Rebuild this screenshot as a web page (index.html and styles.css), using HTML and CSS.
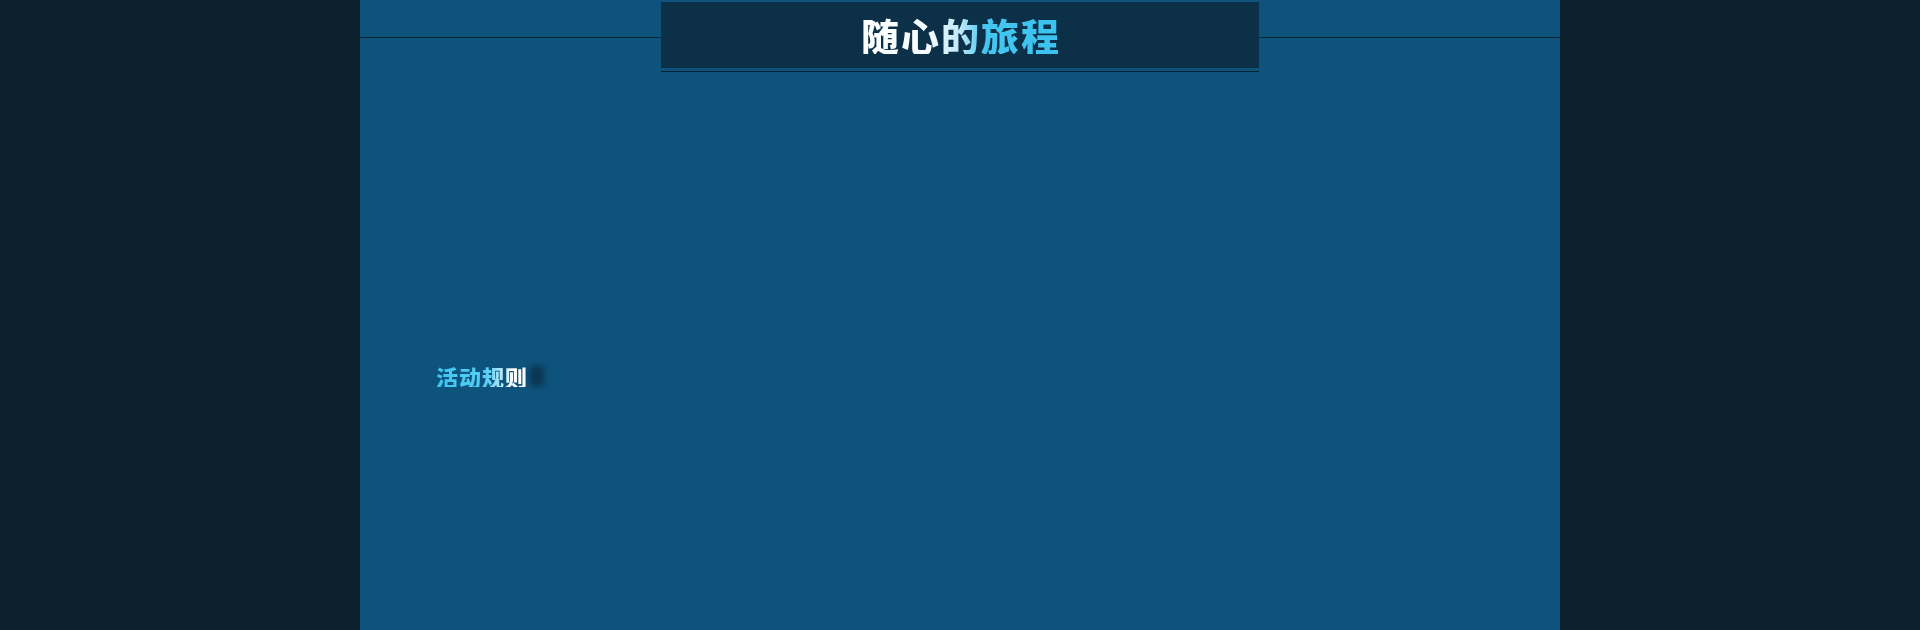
FILE: index.html
```html
<!DOCTYPE html>
<html lang="zh-CN">
<head>
<meta charset="utf-8">
<title>随心的旅程</title>
<link rel="stylesheet" href="styles.css">
</head>
<body>
<div class="page">
  <header class="header">
    <div class="rule-side"></div>
    <div class="title-wrap">
      <div class="title-box"><h1 class="title">随心的旅程</h1></div>
    </div>
    <div class="rule-side"></div>
  </header>
  <main class="content">
    <div class="rules"><span class="rules-text">活动规则</span><span class="rules-ghost"></span></div>
  </main>
</div>
</body>
</html>
```
FILE: styles.css
```css
html, body {
  margin: 0;
  padding: 0;
  height: 100%;
}
body {
  background: #0c202e;
  font-family: "Noto Sans CJK SC", "Noto Sans", sans-serif;
}
.page {
  width: 1200px;
  height: 630px;
  margin: 0 auto;
  background: #0e537c;
  display: flex;
  flex-direction: column;
  overflow: hidden;
}
.header {
  display: grid;
  grid-template-columns: 1fr 598px 1fr;
  align-items: start;
}
.rule-side {
  height: 37px;
  border-bottom: 1px solid #0b2434;
}
.title-wrap {
  padding-top: 2px;
  border-bottom: 1px solid #0b2434;
  padding-bottom: 3px;
}
.title-box {
  height: 66px;
  background: #0d3049;
  display: flex;
  align-items: center;
  justify-content: center;
}
.title {
  margin: 0;
  font-size: 38px;
  font-weight: 900;
  letter-spacing: 2px;
  line-height: 1;
  padding-left: 2px;
  color: #fff;
  background: linear-gradient(90deg, #ffffff 0%, #f4fbff 35%, #bfe9fa 50%, #45c6f1 62%, #3bc2ef 100%);
  -webkit-background-clip: text;
  background-clip: text;
  -webkit-text-fill-color: transparent;
}
.content {
  flex: 1;
  padding: 293px 0 0 76px;
}
.rules {
  display: flex;
  align-items: center;
}
.rules-text {
  font-size: 22px;
  font-weight: 900;
  letter-spacing: 1px;
  line-height: 1;
  background: linear-gradient(90deg, #3cc6f2 0%, #56cdf3 55%, #ffffff 85%);
  -webkit-background-clip: text;
  background-clip: text;
  -webkit-text-fill-color: transparent;
}
.rules-ghost {
  width: 14px;
  height: 20px;
  margin-left: 2px;
  background: #0a3653;
  filter: blur(3px);
}
```
